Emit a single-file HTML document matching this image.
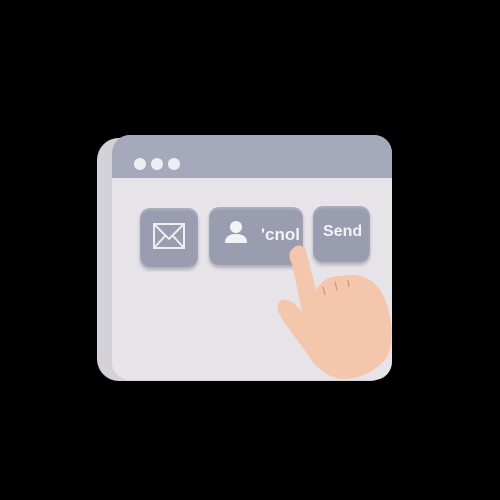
<!DOCTYPE html><html><head><style>
body{margin:0;width:500px;height:500px;background:#000;position:relative;overflow:hidden;font-family:"Liberation Sans",sans-serif}
.a{position:absolute}
.btn{position:absolute;background:#9a9db0;border-radius:10px;box-shadow:0 3px 3px rgba(80,80,100,.35), inset 0 2px 2px rgba(255,255,255,.2)}
</style></head><body>
<div class="a" style="left:97px;top:138px;width:290px;height:243px;background:#d4d2d8;border-radius:22px 16px 16px 22px"></div>
<div class="a" style="left:112px;top:135px;width:280px;height:245px;background:#e6e4e8;border-radius:18px;overflow:hidden">
 <div class="a" style="left:0;top:0;width:280px;height:43px;background:#a6a9bc"></div>
</div>
<div class="a" style="left:134px;top:158px;width:12px;height:12px;border-radius:50%;background:#eeeef2"></div>
<div class="a" style="left:151px;top:158px;width:12px;height:12px;border-radius:50%;background:#eeeef2"></div>
<div class="a" style="left:168px;top:158px;width:12px;height:12px;border-radius:50%;background:#eeeef2"></div>
<div class="btn" style="left:140px;top:208px;width:58px;height:59px">
 <svg width="58" height="59"><rect x="14" y="16" width="30" height="24" fill="none" stroke="#eee" stroke-width="2"/><path d="M14 16 L29 31 L44 16 M14 40 L25 28 M44 40 L33 28" fill="none" stroke="#eee" stroke-width="2"/></svg>
</div>
<div class="btn" style="left:209px;top:207px;width:94px;height:58px">
 <svg class="a" style="left:14px;top:12px" width="26" height="26"><circle cx="13" cy="8" r="6" fill="#f3f3f5"/><path d="M2 24 Q2 15 13 15 Q24 15 24 24Z" fill="#f3f3f5"/></svg>
 <div class="a" style="left:52px;top:18px;color:#f3f3f5;font-weight:bold;font-size:17px">'cnol</div>
</div>
<div class="btn" style="left:313px;top:206px;width:57px;height:56px">
 <div class="a" style="left:10px;top:17px;color:#f3f3f5;font-weight:bold;font-size:16px">Send</div>
</div>
<svg class="a" style="left:0;top:0" width="500" height="500">
 <path d="M290 252 Q298 240 306 250 L316 290 Q325 275 340 276 Q360 272 373 282 Q388 295 391 325 Q394 350 383 362 Q365 380 340 379 Q320 375 308 355 L284 322 Q272 305 282 300 Q292 298 302 312 L292 264 Q288 256 290 252Z" fill="#f4c7ad"/>
 <path d="M323 287 l2 8 M335 282 l2 8 M348 280 l1 7" stroke="#d99a80" stroke-width="1.5"/>
</svg>
</body></html>
